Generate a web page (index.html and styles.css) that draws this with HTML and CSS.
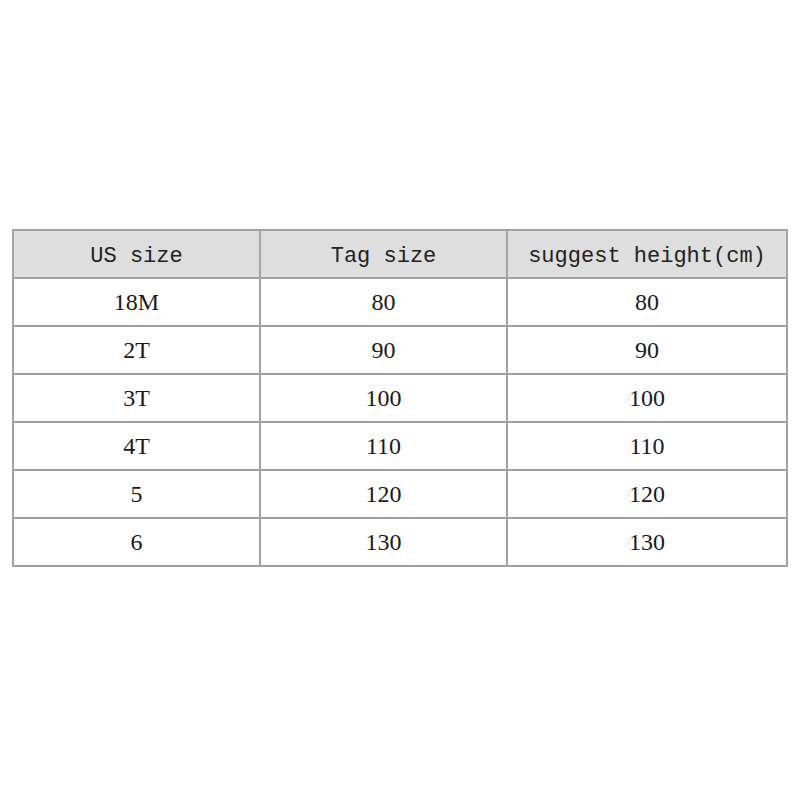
FILE: index.html
```html
<!DOCTYPE html>
<html>
<head>
<meta charset="utf-8">
<link rel="stylesheet" href="styles.css">
</head>
<body>
<div class="page">
<table class="sizes">
  <colgroup><col class="c1"><col class="c2"><col class="c3"></colgroup>
  <thead>
    <tr><th>US size</th><th>Tag size</th><th>suggest height(cm)</th></tr>
  </thead>
  <tbody>
    <tr><td>18M</td><td>80</td><td>80</td></tr>
    <tr><td>2T</td><td>90</td><td>90</td></tr>
    <tr><td>3T</td><td>100</td><td>100</td></tr>
    <tr><td>4T</td><td>110</td><td>110</td></tr>
    <tr><td>5</td><td>120</td><td>120</td></tr>
    <tr><td>6</td><td>130</td><td>130</td></tr>
  </tbody>
</table>
</div>
</body>
</html>
```
FILE: styles.css
```css
html, body {
  margin: 0;
  background: #ffffff;
}
.page {
  padding: 229px 0 0 12px;
}
.sizes {
  border-collapse: collapse;
  table-layout: fixed;
  width: 774px;
  color: #1a1a1a;
}
.c1 { width: 247px; }
.c2 { width: 247px; }
.c3 { width: 280px; }
.sizes th, .sizes td {
  border: 2px solid #a2a2a2;
  height: 46px;
  padding: 0;
  text-align: center;
  vertical-align: middle;
}
.sizes th {
  background: #dedede;
  font-family: "Liberation Mono", monospace;
  font-weight: normal;
  font-size: 22px;
  color: #222;
  height: 42px;
  padding-top: 4px;
}
.sizes td {
  font-family: "Liberation Serif", serif;
  font-size: 24px;
}
```
